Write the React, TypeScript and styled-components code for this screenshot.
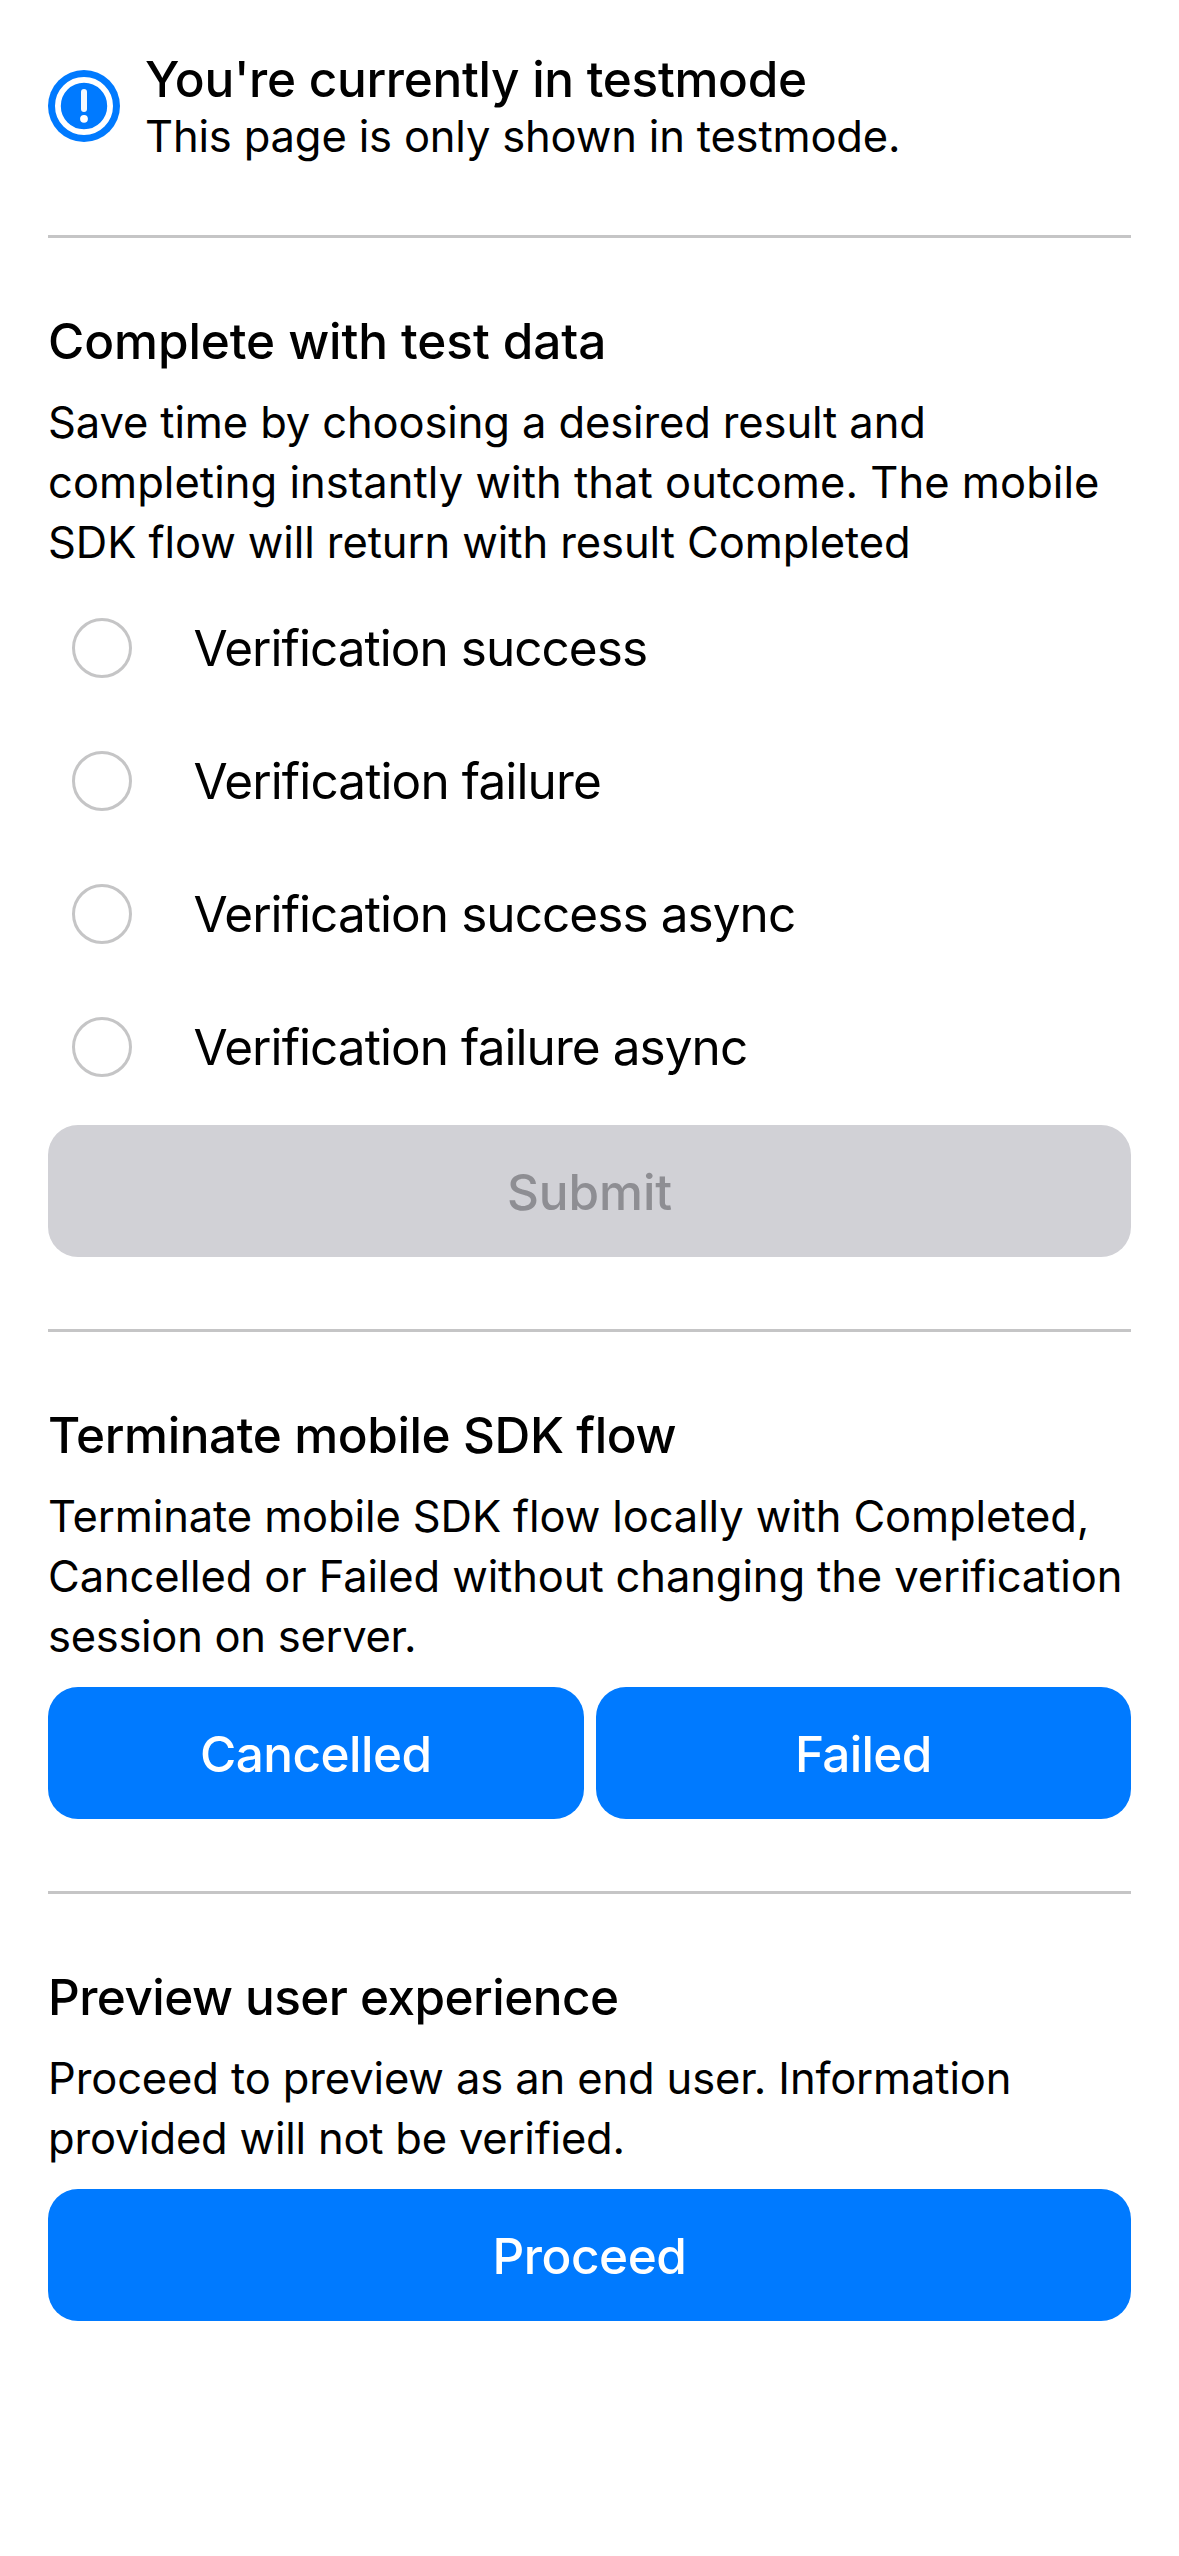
import React from "react";
import styled, { createGlobalStyle } from "styled-components";

const GlobalStyle = createGlobalStyle`
  *, *::before, *::after { box-sizing: border-box; }
  body { margin: 0; background: #fff; color: #000; font-family: Inter, "Noto Sans", sans-serif; }
`;

const Page = styled.main`
  width: 1179px;
  height: 2556px;
  padding: 0 48px;
  display: flex;
  flex-direction: column;
  background: #fff;
`;

const Header = styled.header`
  display: flex;
  align-items: flex-start;
  gap: 25px;
  height: 235px;
  padding-top: 51px;
`;

const HeaderText = styled.div`
  display: flex;
  flex-direction: column;
  gap: 1px;
`;

const Badge = styled.svg`
  width: 72px;
  height: 72px;
  margin-top: 19px;
  flex: none;
`;

const HeaderTitle = styled.h1<{ $spacing: number }>`
  margin: 0;
  font-size: 49.5px;
  line-height: 56px;
  font-weight: 500;
  letter-spacing: ${(p) => p.$spacing}px;
  white-space: nowrap;
`;

const HeaderNote = styled.p<{ $spacing: number }>`
  margin: 0;
  font-size: 43.5px;
  line-height: 56px;
  letter-spacing: ${(p) => p.$spacing}px;
  white-space: nowrap;
`;

const Section = styled.section`
  display: flex;
  flex-direction: column;
  border-top: 3px solid #c5c5c6;
`;

const SectionTitle = styled.h2<{ $spacing: number }>`
  margin: 73px 0 21px;
  font-size: 49.5px;
  line-height: 60px;
  font-weight: 500;
  letter-spacing: ${(p) => p.$spacing}px;
  white-space: nowrap;
`;

const Copy = styled.div`
  display: flex;
  flex-direction: column;
`;

const CopyLine = styled.span<{ $spacing: number }>`
  font-size: 43.5px;
  line-height: 60px;
  letter-spacing: ${(p) => p.$spacing}px;
  white-space: nowrap;
`;

const Options = styled.div`
  display: flex;
  flex-direction: column;
  margin-top: 9px;
`;

const Option = styled.label`
  display: flex;
  align-items: center;
  gap: 61.5px;
  height: 133px;
  padding-left: 24px;
`;

const Radio = styled.span`
  width: 60px;
  height: 60px;
  flex: none;
  border: 3px solid #c5c5c6;
  border-radius: 50%;
`;

const OptionLabel = styled.span<{ $spacing: number }>`
  font-size: 49.5px;
  line-height: 60px;
  letter-spacing: ${(p) => p.$spacing}px;
  white-space: nowrap;
`;

const Actions = styled.div<{ $gapAbove: number }>`
  display: flex;
  gap: 12px;
  margin: ${(p) => p.$gapAbove}px 0 72px;
`;

const Button = styled.button<{ $spacing: number }>`
  flex: 1 1 0;
  height: 132px;
  padding: 1px 0 0;
  border: 0;
  border-radius: 30px;
  background: #007aff;
  color: #fff;
  font-family: inherit;
  font-size: 49.5px;
  line-height: 60px;
  font-weight: 500;
  letter-spacing: ${(p) => p.$spacing}px;

  &:disabled {
    background: #d1d1d6;
    color: #8e8e93;
  }
`;

type TextLine = { text: string; spacing: number };

const testDataCopy: TextLine[] = [
  { text: "Save time by choosing a desired result and", spacing: -0.121 },
  { text: "completing instantly with that outcome. The mobile", spacing: 0.049 },
  { text: "SDK flow will return with result Completed", spacing: -0.079 },
];

const options: TextLine[] = [
  { text: "Verification success", spacing: -0.965 },
  { text: "Verification failure", spacing: -0.884 },
  { text: "Verification success async", spacing: -0.935 },
  { text: "Verification failure async", spacing: -0.942 },
];

const terminateCopy: TextLine[] = [
  { text: "Terminate mobile SDK flow locally with Completed,", spacing: -0.114 },
  { text: "Cancelled or Failed without changing the verification", spacing: -0.114 },
  { text: "session on server.", spacing: -0.283 },
];

const previewCopy: TextLine[] = [
  { text: "Proceed to preview as an end user. Information", spacing: -0.124 },
  { text: "provided will not be verified.", spacing: -0.206 },
];

function Paragraph({ lines }: { lines: TextLine[] }) {
  return (
    <Copy>
      {lines.map((line) => (
        <CopyLine key={line.text} $spacing={line.spacing}>{line.text}</CopyLine>
      ))}
    </Copy>
  );
}

function AlertBadge() {
  return (
    <Badge viewBox="0 0 72 72" aria-hidden="true">
      <circle cx="36" cy="36" r="36" fill="#007aff" />
      <circle cx="36" cy="36" r="26.1" fill="none" stroke="#fff" strokeWidth="5.8" />
      <path d="M36 21.9v17.2" stroke="#f4f9ff" strokeWidth="6" strokeLinecap="round" />
      <circle cx="36" cy="48.8" r="3.9" fill="#fff" />
    </Badge>
  );
}

export default function App() {
  return (
    <>
      <GlobalStyle />
      <Page>
        <Header>
          <AlertBadge />
          <HeaderText>
            <HeaderTitle $spacing={-0.303}>You're currently in testmode</HeaderTitle>
            <HeaderNote $spacing={-0.165}>This page is only shown in testmode.</HeaderNote>
          </HeaderText>
        </Header>

        <Section>
          <SectionTitle $spacing={-0.09}>Complete with test data</SectionTitle>
          <Paragraph lines={testDataCopy} />
          <Options>
            {options.map((option) => (
              <Option key={option.text}>
                <Radio />
                <OptionLabel $spacing={option.spacing}>{option.text}</OptionLabel>
              </Option>
            ))}
          </Options>
          <Actions $gapAbove={12}>
            <Button disabled $spacing={-0.078}>Submit</Button>
          </Actions>
        </Section>

        <Section>
          <SectionTitle $spacing={-0.408}>Terminate mobile SDK flow</SectionTitle>
          <Paragraph lines={terminateCopy} />
          <Actions $gapAbove={21}>
            <Button $spacing={-0.544}>Cancelled</Button>
            <Button $spacing={-0.683}>Failed</Button>
          </Actions>
        </Section>

        <Section>
          <SectionTitle $spacing={-0.559}>Preview user experience</SectionTitle>
          <Paragraph lines={previewCopy} />
          <Actions $gapAbove={21}>
            <Button $spacing={-0.48}>Proceed</Button>
          </Actions>
        </Section>
      </Page>
    </>
  );
}
